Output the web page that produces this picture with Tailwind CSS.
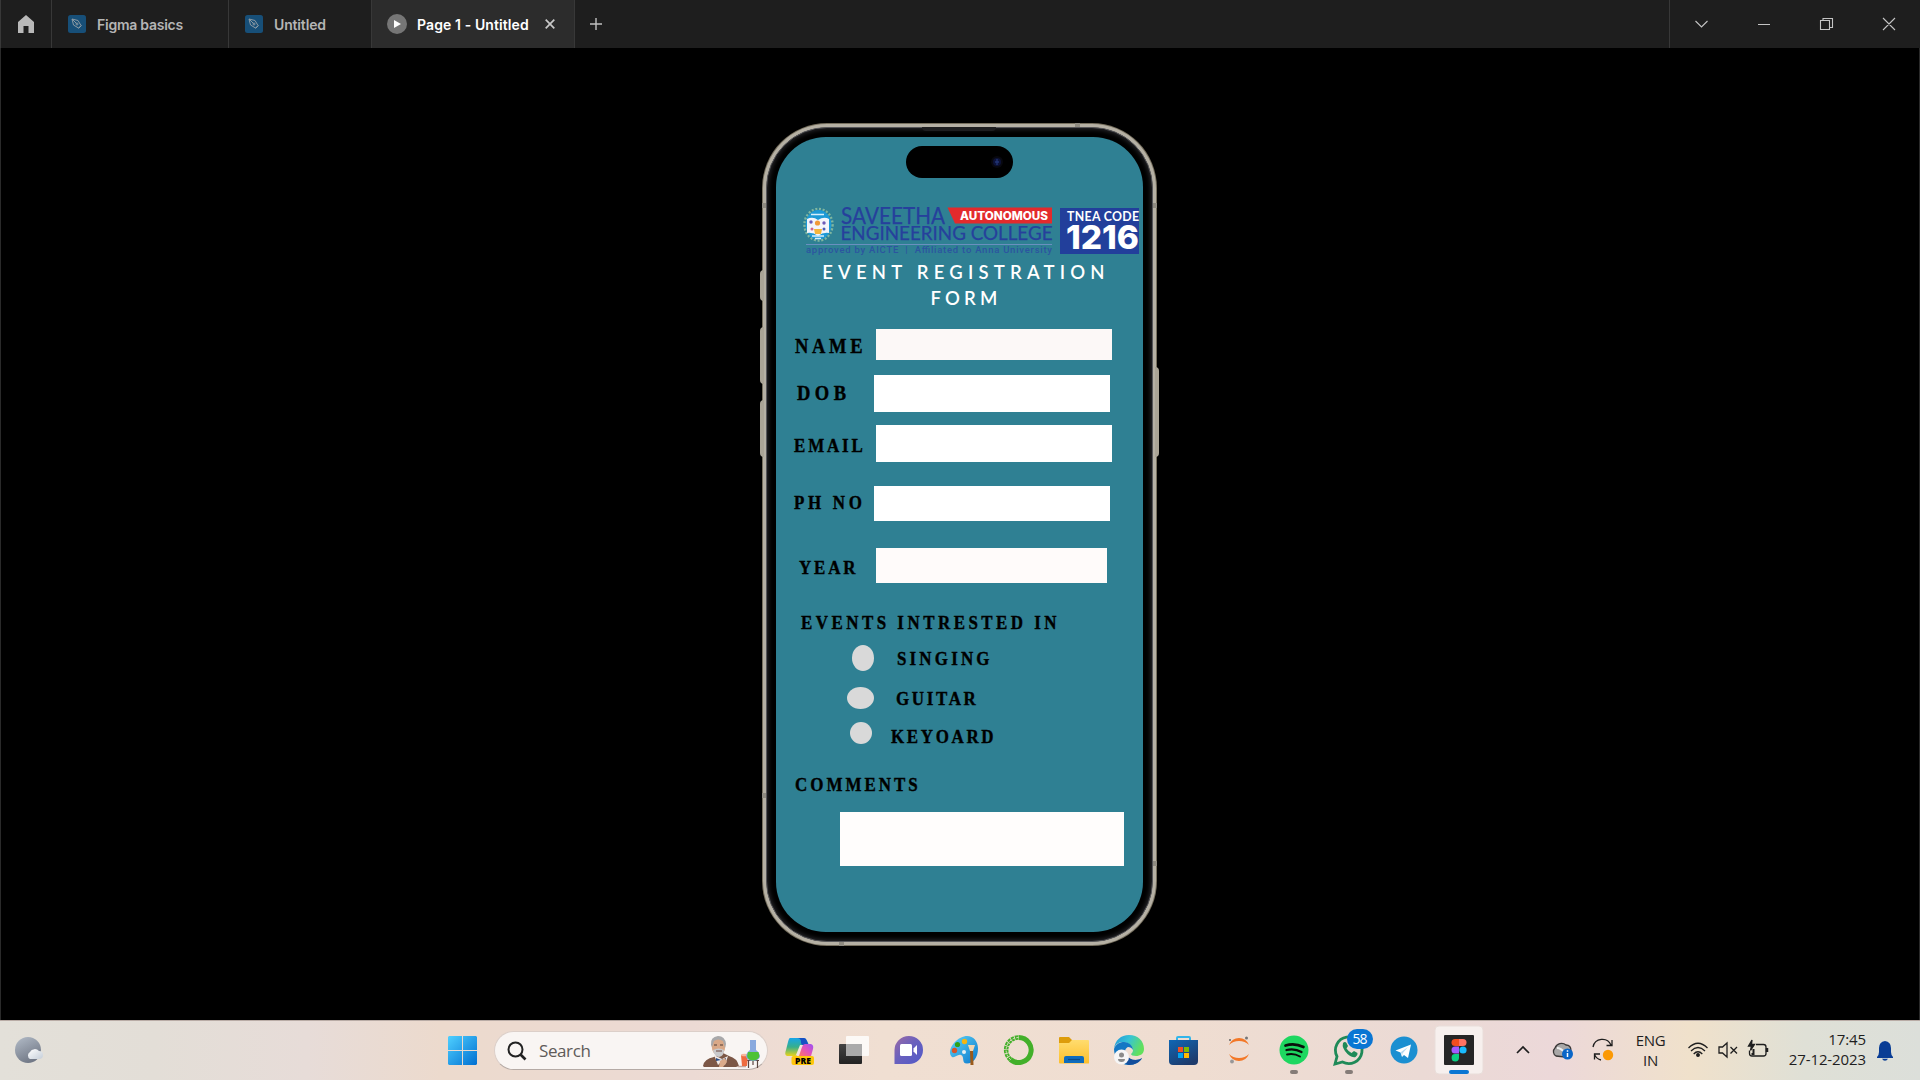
<!DOCTYPE html>
<html lang="en">
<head>
<meta charset="utf-8">
<title>Page 1 - Untitled</title>
<script src="https://cdn.jsdelivr.net/npm/@tailwindcss/browser@4"></script>
</head>
<body class="bg-black">
<div class="flex h-[1080px] w-[1920px] flex-col overflow-hidden bg-black">

  <!-- Tab bar -->
  <header class="flex h-12 shrink-0 border-l border-[#383838] bg-[#1e1e1e] font-['Inter',sans-serif] text-[14px] font-semibold text-[#b5b5b5]">
    <div class="flex w-[51px] items-center justify-center border-r border-[#383838]">
      <svg class="h-[18px] w-4" viewBox="0 0 16 18"><path fill="#b9b9b9" d="M8 0 16 7V18H10.500V11H5.500V18H0V7Z"/></svg>
    </div>
    <div class="flex w-[177px] items-center gap-[11px] border-r border-[#383838] pl-4">
      <svg class="h-[18px] w-[18px]" viewBox="0 0 18 18"><rect width="18" height="18" rx="2.500" fill="#174f78"/><g fill="none" stroke="#8b9aa4" stroke-width="1"><path d="M4 4 10 5.500 13 10.500 10.500 13 5.500 10ZM4 4 8.500 8.500M10.500 13.500 13.500 10.500"/><circle cx="9" cy="9" r="1"/></g></svg>
      <span class="tracking-[-0.25px]">Figma basics</span>
    </div>
    <div class="flex w-[143px] items-center gap-[11px] border-r border-[#383838] pl-4">
      <svg class="h-[18px] w-[18px]" viewBox="0 0 18 18"><rect width="18" height="18" rx="2.500" fill="#174f78"/><g fill="none" stroke="#8b9aa4" stroke-width="1"><path d="M4 4 10 5.500 13 10.500 10.500 13 5.500 10ZM4 4 8.500 8.500M10.500 13.500 13.500 10.500"/><circle cx="9" cy="9" r="1"/></g></svg>
      <span class="tracking-[-0.15px]">Untitled</span>
    </div>
    <div class="flex w-[203px] items-center border-r border-[#383838] bg-[#2c2c2c] pl-[15px] text-white">
      <svg class="h-5 w-5" viewBox="0 0 20 20"><circle cx="10" cy="10" r="10" fill="#767676"/><path d="M7 6v8l7-4z" fill="#fff"/></svg>
      <span class="ml-[10px] w-[128px] whitespace-nowrap tracking-[0.1px]">Page 1 - Untitled</span>
      <svg class="h-[10px] w-[10px]" viewBox="0 0 10 10"><path d="M.7.700 9.300 9.300M9.300.700.700 9.300" stroke="#c8c8c8" stroke-width="1.700"/></svg>
    </div>
    <div class="flex grow items-center pl-[15px]">
      <svg class="h-3 w-3" viewBox="0 0 12 12"><path d="M6 0v12M0 6h12" stroke="#c0c0c0" stroke-width="1.400"/></svg>
    </div>
    <div class="flex w-[251px] items-center border-l border-[#383838]">
      <svg class="h-12 w-[250px]" viewBox="0 0 250 48"><g fill="none" stroke="#c4c4c4" stroke-width="1.100"><path d="M25.500 21l6 6 6-6M88 24.500h12M150.500 20.500h9v9h-9zM153 20.500v-2h9.500v9h-3M213 18l12 12M225 18l-12 12"/></g></svg>
    </div>
  </header>

  <!-- Prototype stage -->
  <main class="flex h-[972px] shrink-0 justify-center border-x border-[#2a2a2a] bg-black pt-[75px] pr-[2px]">
    <div class="relative h-[823px] w-[395px]">
      <!-- side buttons -->
      <div class="absolute top-[147px] -left-[2px] h-[31px] w-1 rounded-l-sm bg-[#aaa496]"></div>
      <div class="absolute top-[204px] -left-[2px] h-[57px] w-1 rounded-l-sm bg-[#aaa496]"></div>
      <div class="absolute top-[277px] -left-[2px] h-[57px] w-1 rounded-l-sm bg-[#aaa496]"></div>
      <div class="absolute top-[244px] -right-[2px] h-[90px] w-1 rounded-r-sm bg-[#aaa496]"></div>
      <div class="h-full rounded-[65px] bg-[#77705f] p-px">
      <div class="h-full rounded-[64px] bg-[#b5b0a4] p-[3px]">
      <div class="h-full rounded-[61px] border border-[#56565a] bg-black p-[9px] shadow-[inset_0_0_5px_1px_#2c2c30]">
        <!-- app screen -->
        <div class="relative flex h-[795px] w-[367px] flex-col overflow-hidden rounded-[50px] bg-[#2f8093] pt-[69px]">
          <div class="absolute top-[9px] left-[130px] flex h-8 w-[107px] items-center justify-end rounded-full bg-black pr-[10px]">
            <svg class="h-[12px] w-[12px]" viewBox="0 0 12 12"><circle cx="6" cy="6" r="6" fill="#08080f"/><circle cx="6" cy="6" r="4" fill="#0c1238"/><path d="M6 3v6M4 6h4" stroke="#213474" stroke-width="1.300"/></svg>
          </div>

          <svg class="ml-[30px] h-[50px] w-[337px] shrink-0 overflow-visible" viewBox="806 206 337 50">
            <ellipse cx="818.500" cy="224.700" rx="14" ry="15.800" fill="none" stroke="#7fb6a0" stroke-width="2.500" stroke-dasharray="2 1.700"/>
            <ellipse cx="818.500" cy="224.700" rx="12.800" ry="14.800" fill="#1d9ad6"/>
            <path d="M807 219q6-3 11 1 6-4 11-1v14q-6-1-11 3-5-4-11-3z" fill="#f2f5fb"/>
            <path d="M814 229h8l-1 5h-6z" fill="#f4b63c"/><circle cx="817.500" cy="223" r="2.600" fill="#f19a38"/>
            <circle cx="811" cy="222" r="1.700" fill="#6b5bb8"/><circle cx="824" cy="223" r="1.700" fill="#6b5bb8"/><circle cx="812" cy="229" r="1.500" fill="#d0648b"/><circle cx="824" cy="229" r="1.500" fill="#495eb6"/>
            <path d="M811 214.500h13M812 236h12M815 238.500h6" stroke="#d7effa" stroke-width="1.300"/>
            <g fill="#26409c" stroke="#26409c" stroke-width=".25" font-family="Lato, sans-serif">
              <text x="841" y="224" font-size="22.800" textLength="104" lengthAdjust="spacingAndGlyphs">SAVEETHA</text>
              <text x="840.500" y="240.300" font-size="18.300" textLength="212" lengthAdjust="spacingAndGlyphs">ENGINEERING COLLEGE</text>
            </g>
            <path d="M806 244.500h246" stroke="#6a8fc0" stroke-width="1"/>
            <text x="806" y="253.300" font-family="Roboto, sans-serif" font-weight="500" font-size="9.500" fill="#2c55a0" textLength="246">approved by AICTE &#160;| &#160;Affiliated to Anna University</text>
            <path d="M947.500 207.500H1052v16H955z" fill="#e32a2c"/>
            <text x="960" y="220" font-family="Inter, sans-serif" font-weight="800" font-size="11.300" fill="#fff" textLength="88" lengthAdjust="spacingAndGlyphs">AUTONOMOUS</text>
            <rect x="1060" y="208" width="79" height="46" fill="#223f9b"/>
            <text x="1067" y="220.700" font-family="Lato, sans-serif" font-weight="700" font-size="12.300" fill="#fff" textLength="72" lengthAdjust="spacing">TNEA CODE</text>
            <text x="1066" y="248.800" font-family="Inter, sans-serif" font-weight="800" font-size="33" fill="#fff" textLength="73" lengthAdjust="spacingAndGlyphs">1216</text>
          </svg>

          <h1 class="mt-[4px] ml-[14px] h-[51px] shrink-0 text-center font-['Lato',sans-serif] text-[18.5px] leading-[25.6px] font-semibold whitespace-nowrap text-white"><span class="tracking-[5.2px]">EVENT REGISTRATION</span><br><span class="tracking-[4.2px]">FORM</span></h1>

          <form class="flex flex-col font-['Liberation_Serif',serif] text-[19.7px] leading-5 font-bold whitespace-nowrap text-black [-webkit-text-stroke:0.4px_black]">
            <div class="mt-[18px] flex h-[31px] items-start">
              <label class="mt-[7px] ml-[19px] w-[81px] origin-left scale-x-[0.86] text-[21.5px] tracking-[4.3px]">NAME</label>
              <div class="h-[31px] w-[236px] bg-[#fcf8f7]"></div>
            </div>
            <div class="mt-[15px] flex h-[37px] items-start">
              <label class="mt-[8px] ml-[21px] w-[77px] origin-left scale-x-[0.86] text-[21.5px] tracking-[5.2px]">DOB</label>
              <div class="h-[37px] w-[236px] bg-white"></div>
            </div>
            <div class="mt-[13px] flex h-[37px] items-start">
              <label class="mt-[10px] ml-[18px] w-[82px] origin-left scale-x-[0.86] tracking-[3.3px]">EMAIL</label>
              <div class="h-[37px] w-[236px] bg-white"></div>
            </div>
            <div class="mt-[23.500px] flex h-[35.500px] items-start">
              <label class="mt-[6.500px] ml-[18px] w-[80px] origin-left scale-x-[0.86] tracking-[4.3px]">PH NO</label>
              <div class="h-[35.500px] w-[236px] bg-white"></div>
            </div>
            <div class="mt-[27px] flex h-[34.500px] items-start">
              <label class="mt-[9px] ml-[23px] w-[77px] origin-left scale-x-[0.86] tracking-[3.3px]">YEAR</label>
              <div class="h-[34.500px] w-[231px] bg-[#fffbfa]"></div>
            </div>
            <p class="mt-[29px] ml-[25px] h-5 w-[320px] origin-left scale-x-[0.86] tracking-[4.05px]">EVENTS INTRESTED IN</p>
            <div class="mt-[13.500px] ml-[76px] flex h-[26px] items-start">
              <span class="h-[26px] w-[22px] rounded-[50%] bg-[#d9d9d9]"></span>
              <span class="mt-[3px] ml-[23px] origin-left scale-x-[0.86] tracking-[3.7px]">SINGING</span>
            </div>
            <div class="mt-4 ml-[71px] flex h-[22px] items-start">
              <span class="h-[22px] w-[27px] rounded-[50%] bg-[#d9d9d9]"></span>
              <span class="mt-[1px] ml-[22px] origin-left scale-x-[0.86] tracking-[3.1px]">GUITAR</span>
            </div>
            <div class="mt-[13px] ml-[74px] flex h-[22px] items-start">
              <span class="h-[22px] w-[22px] rounded-[50%] bg-[#d9d9d9]"></span>
              <span class="mt-[4px] ml-[19px] origin-left scale-x-[0.86] tracking-[3.1px]">KEYOARD</span>
            </div>
            <label class="mt-[30px] ml-[19px] h-5 w-[160px] origin-left scale-x-[0.86] tracking-[3.5px]">COMMENTS</label>
            <div class="mt-[18px] ml-[64px] h-[54px] w-[284px] bg-[#fffdfc]"></div>
          </form>
        </div>
      </div>
      </div>
      </div>
      <!-- earpiece and antenna bands -->
      <div class="absolute top-[4px] left-[160px] h-[4px] w-[74px] rounded-b-md bg-[#1e1e20]"></div>
      <div class="absolute top-0 left-[313px] h-1 w-[5px] bg-[#8f8b81]"></div>
      <div class="absolute top-[80px] left-0 h-[5px] w-1 bg-[#8f8b81]"></div>
      <div class="absolute top-[80px] right-0 h-[5px] w-1 bg-[#8f8b81]"></div>
      <div class="absolute top-[670px] left-0 h-[5px] w-1 bg-[#8f8b81]"></div>
      <div class="absolute top-[738px] right-0 h-[5px] w-1 bg-[#8f8b81]"></div>
      <div class="absolute bottom-0 left-[77px] h-1 w-[5px] bg-[#8f8b81]"></div>
    </div>
  </main>

  <!-- Taskbar -->
  <footer class="flex h-[60px] shrink-0 items-start bg-[linear-gradient(90deg,#e3e0d9_0%,#e3ded7_8%,#e7dcd8_16%,#ecdacd_23%,#ecdad4_36%,#f0dfd2_46%,#efddd1_62%,#ebdad5_74%,#ecd8d9_81%,#f0e1cb_88%,#dfe0d6_94%,#dcdfda_100%)] font-['Open_Sans',sans-serif] shadow-[inset_0_1px_0_#b9aca6]">
    <svg class="h-[60px] w-[494px]" viewBox="0 0 494 60">
      <defs>
        <linearGradient id="moon" x1="0" y1="0" x2=".5" y2="1"><stop stop-color="#b3bcc8"/><stop offset="1" stop-color="#727987"/></linearGradient>
        <linearGradient id="win" gradientUnits="userSpaceOnUse" x1="448" y1="16" x2="477" y2="45"><stop stop-color="#4fd0ff"/><stop offset="1" stop-color="#006fd1"/></linearGradient>
        <linearGradient id="cl" x1="0" y1="0" x2="1" y2="1"><stop stop-color="#fff"/><stop offset="1" stop-color="#c5ced9"/></linearGradient>
      </defs>
      <circle cx="28" cy="30" r="13" fill="url(#moon)"/>
      <path d="M30 39a4 4 0 0 1 0-7 5.500 5.500 0 0 1 9-1 4 4 0 0 1 0 8z" fill="url(#cl)"/>
      <path d="M449 16h13v14h-14V17zM463 16h13l1 1v13h-14zM448 31h14v14h-13l-1-1zM463 31h14v13l-1 1h-13z" fill="url(#win)"/>
    </svg>
    <div class="mt-[11px] flex h-[39px] w-[274px] items-center rounded-full border border-[#dccfc9] border-b-[#b5aaa5] bg-[#f9f5f3] pl-3">
      <svg class="h-5 w-5" viewBox="0 0 20 20"><g fill="none" stroke="#222" stroke-width="2"><circle cx="8.500" cy="8.500" r="7"/><path d="M13.500 13.500l5 5" stroke-width="2.600"/></g></svg>
      <span class="ml-[12px] w-[162px] text-[17px] tracking-[-0.4px] text-[#5f5b59]">Search</span>
      <svg class="h-[37px] w-[62px]" viewBox="702 12 62 37">
        <path d="M704 46q1-7 11-9l7-5 8 4q8 2 10 10l-3 1h-32z" fill="#7c5746"/>
        <path d="M715 35l4 10 3-3 4 3 3-9-6 3z" fill="#eee9e8"/>
        <path d="M717 38l5 2 5-2v3l-5-1-5 1z" fill="#284b85"/>
        <ellipse cx="719.500" cy="26" rx="6.800" ry="9.500" fill="#d9a887"/>
        <path d="M712 25q-1-8 7-9 7 0 8 8l-1 4-2-7q-5-3-9 0l-2 6z" fill="#a8a8aa"/>
        <path d="M714 30q6-3 11 0 0 6-5 7-5-1-6-7z" fill="#c9c9cc"/><path d="M717 31h6" stroke="#795b56" stroke-width="1.200"/>
        <path d="M715 25h3M721 25h3" stroke="#513c36" stroke-width="1.200"/>
        <path d="M721 41l5-3 2 4-4 5h-4z" fill="#dbaa8a"/>
        <path d="M739 46.500h8" stroke="#c3a79c" stroke-width="1.500"/>
        <path d="M748 40.500h12M749.500 41v7M758.500 41v7M754 41v4" stroke="#5b4540" stroke-width="1.200" fill="none"/>
        <path d="M742 35h7l-1 11h-5z" fill="#ef6c40"/><ellipse cx="745.500" cy="35" rx="3.500" ry="1.300" fill="#f7b79d"/>
        <path d="M751 20h6v10q4 3 4 7-2 4-7 4t-7-4q0-4 4-7z" fill="#8aa9de"/>
        <path d="M749 32h10.500q3 8-5.500 8.500-8-.500-5-8.500z" fill="#4cc236"/>
      </svg>
    </div>
    <div class="ml-1 flex">
      <!-- Copilot -->
      <svg class="h-[60px] w-[55px]" viewBox="0 0 55 60">
        <defs><linearGradient id="c1" x1="0" y1="0" x2="0" y2="1"><stop stop-color="#16a5e9"/><stop offset=".5" stop-color="#37af8c"/><stop offset="1" stop-color="#ead319"/></linearGradient><linearGradient id="c2" x1="0" y1="1" x2="1" y2="0"><stop stop-color="#ff7563"/><stop offset=".5" stop-color="#e253ba"/><stop offset="1" stop-color="#9a52f5"/></linearGradient></defs>
        <path d="M18 18h14q2 0 3 3l2 4h-6q-2 0-3 3l-2 6q-1 2-3 2h-8q-3-1-1-6l2-8q1-4 2-4z" fill="url(#c1)"/>
        <path d="M25 18h7q2 0 3 3l1.500 4H31q-2 0-2-3 0-4-4-4z" fill="#1750c4"/>
        <path d="M28 25h3l-3.500 10H24z" fill="#f3e4dd"/>
        <path d="M33 24h6q3 1 2 5l-2 7H27l3-9q1-3 3-3z" fill="url(#c2)"/>
        <rect x="19.500" y="36" width="22.500" height="9" rx="2" fill="#fdc70c"/>
        <text x="31" y="43.500" font-family="Open Sans, sans-serif" font-weight="800" font-size="8.500" text-anchor="middle" textLength="16">PRE</text>
      </svg>
      <!-- Task view -->
      <svg class="h-[60px] w-[55px]" viewBox="0 0 55 60">
        <defs><linearGradient id="t1" x1="0" y1="0" x2="0" y2="1"><stop stop-color="#444"/><stop offset="1" stop-color="#222"/></linearGradient></defs>
        <rect x="12" y="24" width="23" height="20" rx="1" fill="url(#t1)"/><rect x="19" y="16" width="23" height="20" rx="1" fill="#fff" fill-opacity=".8"/><path d="M19 24h16v12H19z" fill="#aaa"/>
      </svg>
      <!-- Chat -->
      <svg class="h-[60px] w-[55px]" viewBox="0 0 55 60">
        <defs><linearGradient id="h1" x1="0" y1="0" x2="1" y2="1"><stop stop-color="#9c6aa5"/><stop offset=".45" stop-color="#6b61bd"/><stop offset="1" stop-color="#5059c9"/></linearGradient></defs>
        <path d="M27 16a14 14 0 1 1 0 28H12.500V30A14.300 14.300 0 0 1 27 16z" fill="url(#h1)"/><rect x="18" y="24" width="12" height="12" rx="1.500" fill="#fff"/><path d="M31.500 28.500 35 25v10l-3.500-3.500z" fill="#fff"/>
      </svg>
      <!-- Paint -->
      <svg class="h-[60px] w-[55px]" viewBox="0 0 55 60">
        <defs><linearGradient id="p1" x1="0" y1="0" x2="1" y2="1"><stop stop-color="#5ed4f6"/><stop offset="1" stop-color="#0a78cd"/></linearGradient></defs>
        <path d="M27 16.500c8-2 14 4 14 12 0 9-5 15-11 15-6 0-2-7-6-8.500-4-1-6 3.500-9 2-6-6 3-18.500 12-20.500z" fill="url(#p1)"/><circle cx="17.500" cy="30.500" r="2.700" fill="#d75429"/><circle cx="20.500" cy="24.500" r="2.600" fill="#2fa116"/><circle cx="27.500" cy="21.500" r="2.700" fill="#f4b512"/><circle cx="27" cy="32" r="2" fill="#e6eff2"/>
        <path d="M31 25h7l-2 6h-3z" fill="#f1d5b1"/><path d="M33 31h3l.5 14h-3z" fill="#9a5a1b"/>
      </svg>
      <!-- Anaconda -->
      <svg class="h-[60px] w-[55px]" viewBox="0 0 55 60">
        <path d="M26.500 17.500A12.500 12.500 0 1 1 18.500 39.500" fill="none" stroke="#43b02a" stroke-width="5"/><path d="M18.500 39.500A12.500 12.500 0 0 1 26.500 17.500" fill="none" stroke="#43b02a" stroke-width="4.500" stroke-dasharray="3 .8"/><path d="M18.500 39.500A12.500 12.500 0 0 1 26.500 17.500" fill="none" stroke="#f0e2d6" stroke-width="1" stroke-dasharray="2 2"/>
      </svg>
      <!-- File explorer -->
      <svg class="h-[60px] w-[55px]" viewBox="0 0 55 60">
        <defs><linearGradient id="f1" x1="0" y1="0" x2="0" y2="1"><stop stop-color="#ffdc6e"/><stop offset="1" stop-color="#fdbf2b"/></linearGradient></defs>
        <path d="M12 18q0-1 1-1h9l3 3h15v6H12z" fill="#dd9c0b"/><path d="M12 23h10l3-3h16q1 0 1 1v22q0 .500-1 .500H13q-1 0-1-1z" fill="url(#f1)"/><path d="M17 43v-5q0-2 2-2h16q2 0 2 2v5z" fill="#0f6cbd"/><path d="M21 39.500h12" stroke="#0b4a87" stroke-width="1.200"/>
      </svg>
      <!-- Edge -->
      <svg class="h-[60px] w-[55px]" viewBox="0 0 55 60">
        <defs><linearGradient id="e1" x1="0" y1="0" x2="1" y2=".4"><stop stop-color="#2093d9"/><stop offset=".5" stop-color="#36c3d6"/><stop offset="1" stop-color="#62e05d"/></linearGradient></defs>
        <path d="M12 29C13 20 19 15 27 15c9 0 15 6 15 14 0 5-4 7-8 7-3 0-5-1-5-2 1-1 2-2 2-4 0-4-5-8-10-8-5 0-8 3-9 7z" fill="url(#e1)"/>
        <path d="M12 29c2-6 7-7 10-7 5 0 9 4 9 8-1-2-3-3-5-3-5 2-5 13 7 13 3 0 6-1 7-2-2 4-7 7-13 7-9 0-15-8-15-16z" fill="#1378c4"/><path d="M24 31c0 9 11 11 16 7-2 4-7 7-13 7-5 0-7-10-3-14z" fill="#124e9c"/>
        <circle cx="19.500" cy="37" r="7.500" fill="#f6f6f6"/><circle cx="19.500" cy="35" r="2.500" fill="#8b8b8b"/><path d="M16 39h7q0 3-3.500 3T16 39z" fill="#8b8b8b"/>
      </svg>
      <!-- Store -->
      <svg class="h-[60px] w-[55px]" viewBox="0 0 55 60">
        <defs><linearGradient id="s1" x1="0" y1="0" x2=".6" y2="1"><stop stop-color="#0f67b5"/><stop offset="1" stop-color="#1d3b6c"/></linearGradient></defs>
        <path d="M20 22v-4q0-1 1-1h11q1 0 1 1v4" fill="none" stroke="#32b5ea" stroke-width="2"/><path d="M12 20h29v21q0 4-4 4H16q-4 0-4-4z" fill="url(#s1)"/><path d="M21 27h5v5h-5z" fill="#f25022"/><path d="M27 27h5v5h-5z" fill="#7fba00"/><path d="M21 33h5v5h-5z" fill="#00a4ef"/><path d="M27 33h5v5h-5z" fill="#ffb900"/>
      </svg>
      <!-- Jupyter -->
      <svg class="h-[60px] w-[55px]" viewBox="0 0 55 60">
        <path d="M17 25q3-7 10-7t10 7q-4-4-10-4t-10 4zM17 34q4 4 10 4t10-4q-3 7-10 7t-10-7z" fill="#f37726"/><circle cx="34.500" cy="18" r="1.500" fill="#767677"/><circle cx="18" cy="20" r="1" fill="#616262"/><circle cx="20" cy="41.500" r="1.900" fill="#989798"/>
      </svg>
      <!-- Spotify -->
      <svg class="h-[60px] w-[55px]" viewBox="0 0 55 60">
        <circle cx="27" cy="30" r="14.500" fill="#1ed760"/><g fill="none" stroke="#0a0f0b" stroke-linecap="round"><path d="M18.500 25.500q9-3 18 1.500" stroke-width="2.700"/><path d="M19.500 30q8-2 15 2" stroke-width="2.300"/><path d="M20 34.500q7-1.500 13 2" stroke-width="1.900"/></g><rect x="23" y="50" width="8" height="4" rx="2" fill="#857c78"/>
      </svg>
      <!-- WhatsApp -->
      <svg class="h-[60px] w-[55px]" viewBox="0 0 55 60">
        <path d="M13 44l2-7.500A13.300 13.300 0 1 1 20.500 42z" fill="none" stroke="#1f8a58" stroke-width="2.800"/><path d="M21 23q2-2 3.500 0l1.500 3-1.500 2.500q2 3 5 4.500l2.500-2 3.500 2q.5 2.500-2 4-3 1-8-3-6-6-4.500-11z" fill="#1f8a58"/>
        <rect x="25" y="9" width="26" height="20" rx="10" fill="#0a76d3"/><text x="38" y="24" font-family="Open Sans, sans-serif" font-size="14" fill="#fff" text-anchor="middle" textLength="15">58</text><rect x="23" y="50" width="8" height="4" rx="2" fill="#857c78"/>
      </svg>
      <!-- Telegram -->
      <svg class="h-[60px] w-[55px]" viewBox="0 0 55 60">
        <circle cx="27" cy="30" r="13.500" fill="#1b8fd1"/><path d="M18.500 30.500 34 24.500l-3 13.500-4-3-2 2-1.500-4.500z" fill="#fff"/><path d="M24 32l7-5-5.500 6.500-.5 3z" fill="#b8d9ee"/>
      </svg>
      <!-- Figma -->
      <svg class="h-[60px] w-[55px]" viewBox="0 0 55 60">
        <rect x="3" y="6" width="48" height="48" rx="4" fill="#f7f0ee" stroke="#e9deda"/><rect x="12" y="15" width="30" height="30" rx="1" fill="#262626"/>
        <path d="M27 19h-4a3.500 3.500 0 0 0 0 7h4z" fill="#f24e1e"/><path d="M27 19h4a3.500 3.500 0 0 1 0 7h-4z" fill="#ff7262"/><path d="M27 26.500h-4a3.500 3.500 0 0 0 0 7h4z" fill="#a259ff"/><circle cx="31" cy="30" r="3.600" fill="#1abcfe"/><path d="M27 34h-4a3.700 3.700 0 1 0 4 3.700z" fill="#0acf83"/><rect x="17" y="50" width="20" height="4" rx="2" fill="#0a76d3"/>
      </svg>
    </div>
    <svg class="ml-[13px] h-[60px] w-[120px]" viewBox="1500 0 120 60">
      <path d="M1517 33l6-6 6 6" fill="none" stroke="#1e1e1e" stroke-width="1.700"/>
      <path d="M1556 36a5 5 0 0 1-1-8 7 7 0 0 1 11-3q5 0 5 6l-6 6z" fill="#a9a7a7" stroke="#3b3838" stroke-width="1.300"/><path d="M1557 28q4 0 8 5" fill="none" stroke="#eee" stroke-width="2"/>
      <circle cx="1567.500" cy="34" r="5.500" fill="#0a66c8"/><path d="M1567.500 33v4M1567.500 30.300v1.500" stroke="#fff" stroke-width="1.500"/>
      <g fill="none" stroke="#1e1e1e" stroke-width="1.300"><path d="M1593 27a9.500 9.500 0 0 1 18-2M1612 20v5.500h-5.500M1594.500 39.500v-5.500h5.500M1594.500 34.500q2 4.500 6.500 5.500"/></g><circle cx="1608" cy="35" r="5.200" fill="#fb9905"/>
    </svg>
    <div class="flex h-[60px] w-[61px] flex-col items-center pt-[10px] text-[15px] leading-5 tracking-[-0.3px] text-[#1e1e1e]"><span>ENG</span><span>IN</span></div>
    <svg class="ml-px h-[60px] w-[92px]" viewBox="1682 0 92 60"><g fill="none" stroke="#1e1e1e" stroke-width="1.300">
      <path d="M1688.500 28q9.500-9.500 19 0M1691 31q7-7 14 0M1693.700 34q4.300-4.500 8.600 0"/><circle cx="1698" cy="35" r="1.300" fill="#1e1e1e"/>
      <path d="M1719 27h3.500l4.500-4v14l-4.500-4h-3.500zM1730.500 27l6.500 6.500M1737 27l-6.500 6.500"/>
      <path d="M1756 24.500h7.500q2.500 0 2.500 2.500v6.500q0 2.500-2.500 2.500H1752q-2.500 0-2.500-2.500v-3" /><path d="M1767 28v4" stroke-width="2.500"/><path d="M1752 20l-3.500 6h3l-1 4.500 4-6h-3z" fill="#1e1e1e"/><path d="M1753.500 29v5h-2" stroke-width="2"/></g>
    </svg>
    <div class="flex h-[60px] w-[92px] flex-col items-end pt-[9px] text-[15px] leading-5 tracking-[-0.1px] whitespace-nowrap text-[#1e1e1e]"><span>17:45</span><span>27-12-2023</span></div>
    <svg class="ml-[10px] h-[60px] w-[18px]" viewBox="0 0 18 60"><path d="M1 37q2-2 2-5v-4q0-6 6-7 6 1 6 7v4q0 3 2 5v1H1zM6 38.800h6q-1 2-3 2t-3-2z" fill="#093d95"/></svg>
  </footer>
</div>
</body>
</html>
